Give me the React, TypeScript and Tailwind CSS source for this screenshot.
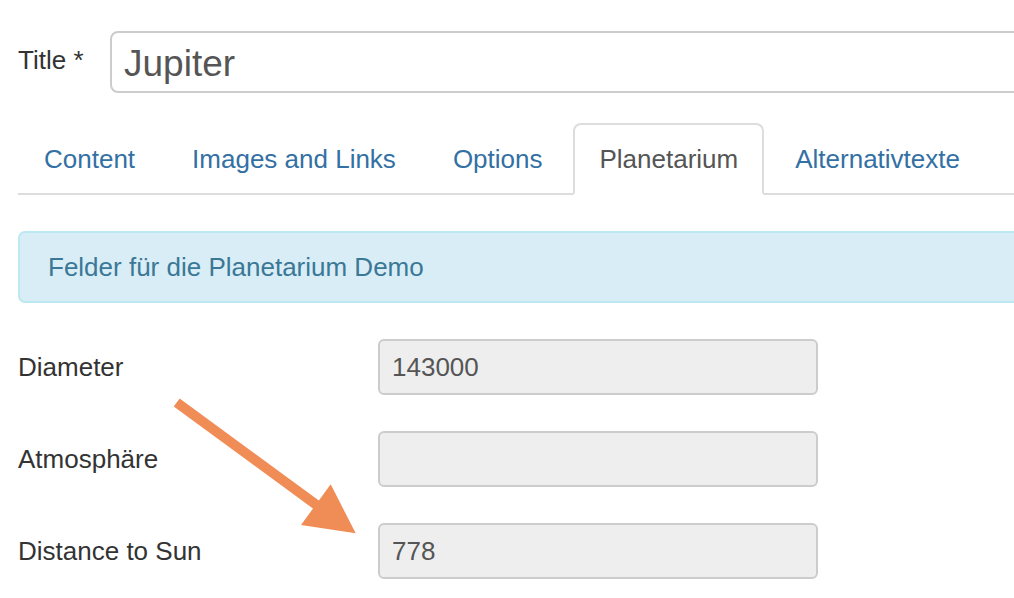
import React from "react";

const tabs = ["Content", "Images and Links", "Options", "Planetarium", "Alternativtexte"];
const fields = [
  { label: "Diameter", value: "143000" },
  { label: "Atmosphäre", value: "" },
  { label: "Distance to Sun", value: "778" },
];

export default function App() {
  return (
    <div className="relative w-[1014px] h-[598px] overflow-hidden bg-white font-['Liberation_Sans',Arial,sans-serif] text-[26px] text-[#333]">
      <div className="w-[1100px] pl-[18px] pt-[31px]">
        <div className="flex items-start">
          <label className="w-[92px] shrink-0 pt-[11px] leading-[36px]">Title *</label>
          <div className="flex-1 h-[62px] border-2 border-[#cccccc] rounded-[8px] pl-[12px] pt-[6px] leading-[50px] text-[37px] text-[#555]">
            Jupiter
          </div>
        </div>

        <ul className="mt-[30px] flex border-b-2 border-[#dddddd]">
          {tabs.map((t) => {
            const active = t === "Planetarium";
            return (
              <li
                key={t}
                className={
                  active
                    ? "-mb-[2px] mr-[5px] border-2 border-[#dddddd] border-b-white rounded-t-[8px] bg-white px-[24px] py-[16px] leading-[36px] text-[#555]"
                    : "-mb-[2px] mr-[5px] border-2 border-transparent rounded-t-[8px] px-[24px] py-[16px] leading-[36px] text-[#3370a4]"
                }
              >
                {t}
              </li>
            );
          })}
        </ul>

        <div className="mt-[36px] border-2 border-[#bce8f1] bg-[#d9edf7] rounded-[7px] pl-[28px] py-[16px] leading-[36px] text-[#3a7896]">
          Felder für die Planetarium Demo
        </div>

        <div className="mt-[36px]">
          {fields.map((f) => (
            <div key={f.label} className="flex items-start mb-[36px]">
              <label className="w-[360px] shrink-0 pt-[10px] leading-[36px]">{f.label}</label>
              <div className="w-[440px] h-[56px] border-2 border-[#cccccc] rounded-[6px] bg-[#eeeeee] px-[12px] py-[8px] leading-[36px] text-[#555]">
                {f.value}
              </div>
            </div>
          ))}
        </div>
      </div>

      <svg
        className="absolute left-0 top-0 pointer-events-none"
        width="1014"
        height="598"
        viewBox="0 0 1014 598"
      >
        <line x1="176.7" y1="402.5" x2="320" y2="507.5" stroke="#f08c55" strokeWidth="10" />
        <polygon points="355.7,533.3 330.7,484.3 301,525" fill="#f08c55" />
      </svg>
    </div>
  );
}
